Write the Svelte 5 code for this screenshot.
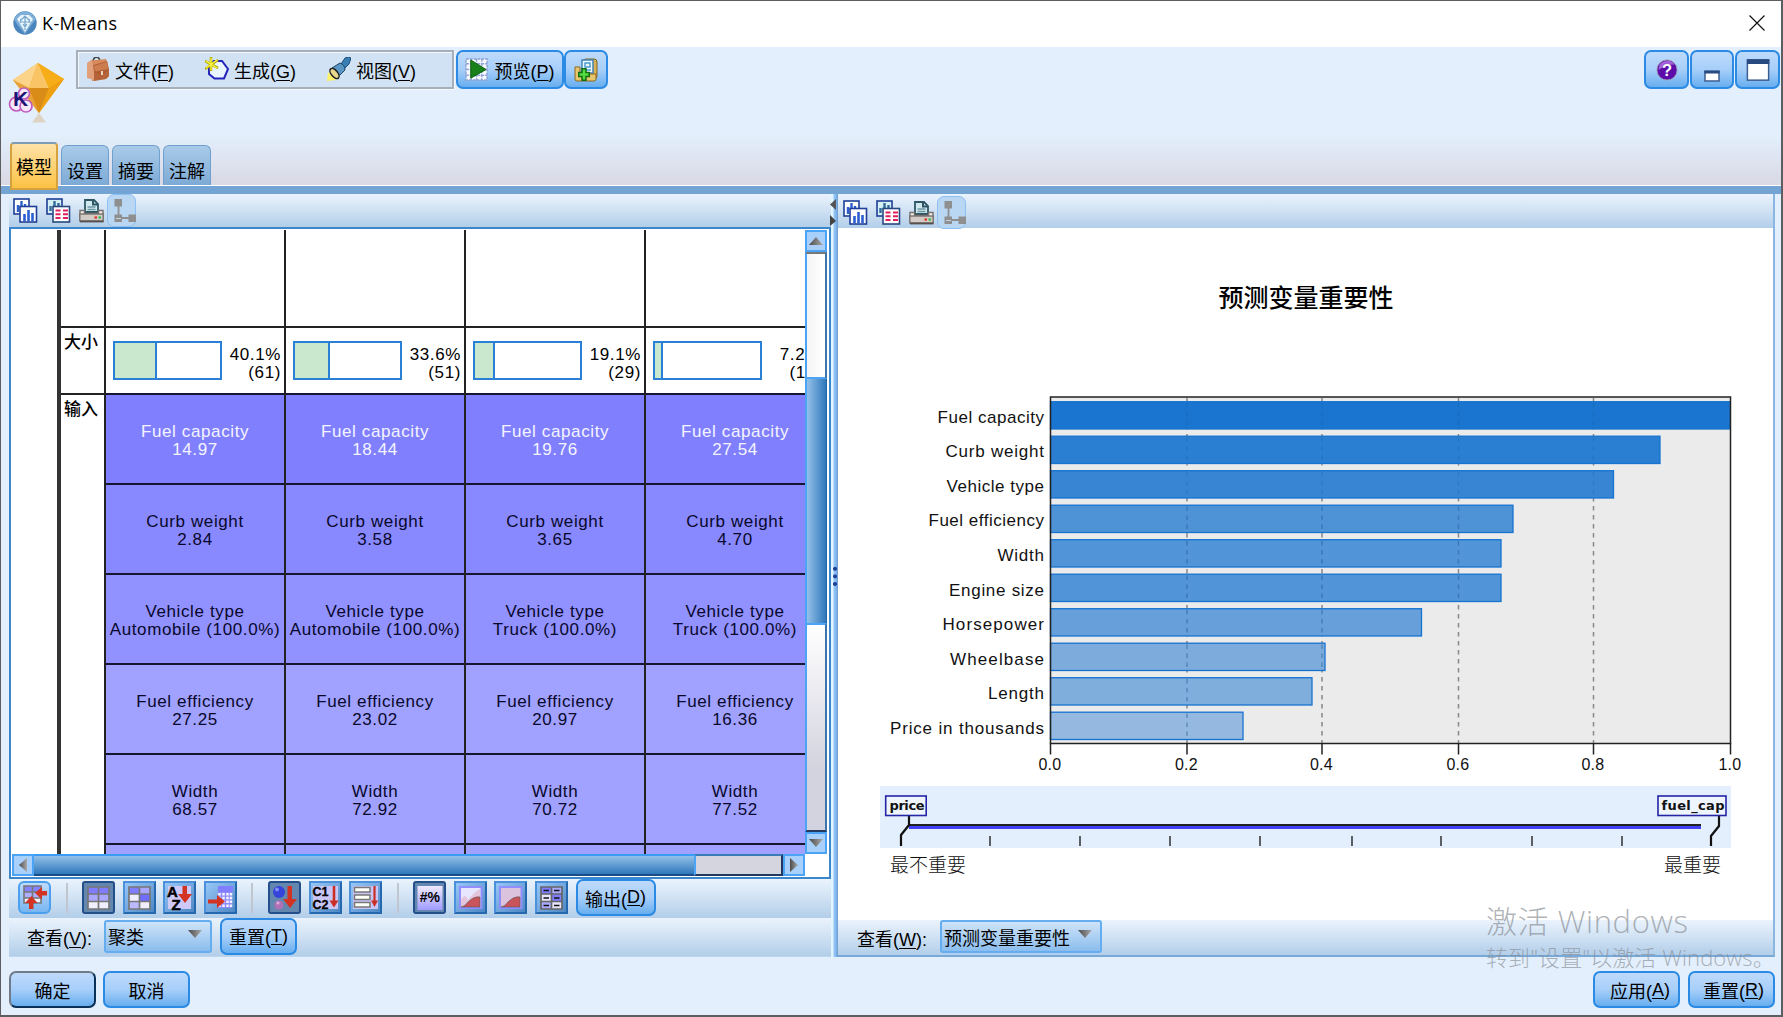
<script>
  const clusters = [
    { pct: '40.1%', n: '(61)', share: 40.1, values: ['14.97', '2.84', 'Automobile (100.0%)', '27.25', '68.57'] },
    { pct: '33.6%', n: '(51)', share: 33.6, values: ['18.44', '3.58', 'Automobile (100.0%)', '23.02', '72.92'] },
    { pct: '19.1%', n: '(29)', share: 19.1, values: ['19.76', '3.65', 'Truck (100.0%)', '20.97', '70.72'] },
    { pct: '7.2%', n: '(11)', share: 7.2, values: ['27.54', '4.70', 'Truck (100.0%)', '16.36', '77.52'] }
  ];
  const inputs = ['Fuel capacity', 'Curb weight', 'Vehicle type', 'Fuel efficiency', 'Width'];
  const bars = [
    { name: 'Fuel capacity', w: 106.5, end: 680, color: '#1a75d0' },
    { name: 'Curb weight', w: 98.5, end: 610, color: '#2a7fd2' },
    { name: 'Vehicle type', w: 97.5, end: 563.5, color: '#3785d3' },
    { name: 'Fuel efficiency', w: 115.5, end: 463, color: '#4f93d7' },
    { name: 'Width', w: 46.5, end: 451, color: '#5195d8' },
    { name: 'Engine size', w: 95, end: 451, color: '#5195d8' },
    { name: 'Horsepower', w: 101.5, end: 371.5, color: '#669fd9' },
    { name: 'Wheelbase', w: 94, end: 275, color: '#7dabdc' },
    { name: 'Length', w: 56, end: 262, color: '#7faddc' },
    { name: 'Price in thousands', w: 154, end: 193, color: '#94b8e0' }
  ];
  const ticks = [[0, '0.0'], [136.5, '0.2'], [271.5, '0.4'], [408, '0.6'], [543, '0.8'], [680, '1.0']];
  const marks = [110, 200, 290, 380, 472, 561, 652, 742];
  const menus = [['文件', 'F'], ['生成', 'G'], ['视图', 'V']];
</script>

{#snippet viewIcons()}
  <svg class="ico" viewBox="0 0 25 25">
    <rect x="1" y="1" width="15" height="15" fill="#fff" stroke="#1f3f98" stroke-width="1.6" />
    <path d="M5 14V7M8.500 14V3M12 14V6" stroke="#2b5fd0" stroke-width="2.400" />
    <rect x="7" y="8.500" width="16.500" height="15.500" fill="#fff" stroke="#1f3f98" stroke-width="1.600" />
    <path d="M11.500 23v-7M15.500 23v-11M19.500 23v-8" stroke="#2b5fd0" stroke-width="2.600" />
  </svg>
  <svg class="ico" viewBox="0 0 25 25">
    <rect x="1" y="1" width="15" height="15" fill="#d5f0f5" stroke="#1f3f98" stroke-width="1.600" />
    <path d="M4.500 13V8M8.500 8V3M12.500 8V5" stroke="#326b98" stroke-width="2.400" />
    <rect x="7" y="8.500" width="16.500" height="15.500" fill="#fff" stroke="#27497f" stroke-width="1.600" />
    <path d="M9.500 12.500h5M17 12.500h5M9.500 16.200h5M17 16.200h5M9.500 20h5M17 20h5" stroke="#e0205c" stroke-width="2" />
  </svg>
  <svg class="ico" viewBox="0 0 25 25">
    <path d="M6 14V2h9l4 4v8z" fill="#cfe9ee" stroke="#2e5664" stroke-width="1.800" />
    <path d="M14 1.500v5h5" fill="none" stroke="#2e5664" stroke-width="2" />
    <path d="M8.500 9h8M8.500 11.500h8" stroke="#6f99a5" stroke-width="1.300" />
    <path d="M1 12.500h4.500v3h14v-3H24V18H1z" fill="#f3f1ee" stroke="#77706e" stroke-width="1.400" />
    <rect x=".8" y="16" width="23.400" height="7" fill="#d2cbc6" stroke="#77706e" stroke-width="1.400" />
    <path d="M1 23.500h23.500" stroke="#57504e" stroke-width="1.800" />
    <path d="M15.500 19.500h2.500" stroke="#e03020" stroke-width="2.200" />
    <path d="M19.500 19.500h2.500" stroke="#30c050" stroke-width="2.200" />
  </svg>
  <span class="ghost">
    <svg viewBox="0 0 28 32">
      <path d="M10.500 8v15h13" fill="none" stroke="#8f8f8f" stroke-width="1.800" />
      <rect x="6.500" y="4" width="7.500" height="7.500" fill="#8f8f8f" />
      <rect x="6.500" y="19.500" width="7.500" height="7.500" fill="#8f8f8f" />
      <path d="M8 23.500h5" stroke="#c5d5e8" />
      <rect x="20.500" y="19.500" width="7.500" height="7.500" fill="#8f8f8f" />
    </svg>
  </span>
{/snippet}

{#snippet gridShape(flip)}
  <rect x="6" y="6" width="21" height="22" fill="#f0efff" />
  <path d="M6 6h21v7H6z" fill="#7f7cff" />
  <path d="M6 13h21v7.500H6z" fill="#a9a7ff" />
  {#if flip}
    <path d="M16.500 6H27v7H16.500z" fill="#a9a7ff" />
    <path d="M6 13h10.500v7.500H6z" fill="#f0efff" />
    <path d="M16.500 13H27v7.500H16.500z" fill="#6f6cff" />
    <path d="M6 20.500h10.500V28H6z" fill="#bbb9ff" />
  {/if}
  <path d="M6 6h21v22H6zM6 13h21M6 20.500h21M16.500 6v22" fill="none" stroke="#777" stroke-width="1.700" />
{/snippet}

<div class="window">
  <div class="title">
    <svg class="app" viewBox="0 0 24 24">
      <circle cx="12" cy="12" r="11.700" fill="#4a86bd" />
      <path d="M1 8Q5 1 12 .3 19 1 23 8l-4 5-7 10L4 13z" fill="#7eafd8" />
      <path d="M4 8l4-4h8l4 4-8 13z" fill="#eaf4fb" />
      <path d="M8 9l4-4 4 4M12 5v14M7 11h10M8 8l-1 4M16 8l1 4M10 13l2 3 2-3" fill="none" stroke="#75a6ce" stroke-width="1.200" />
    </svg>
    <span>K-Means</span>
    <svg class="close" viewBox="0 0 16 16"><path d="M.5.500l15 15M15.500.500l-15 15" stroke="#111" stroke-width="1.200" /></svg>
  </div>

  <div class="header">
    <div class="top">
      <svg class="logo" viewBox="0 0 56 60">
        <path d="M5 17L30 0l26 16-25 34z" fill="#f0a51c" />
        <path d="M5 17L30 0 21 25z" fill="#fbd48a" />
        <path d="M30 0l11 25H21z" fill="#f9c465" />
        <path d="M30 0l26 16-15 9z" fill="#f7ad17" />
        <path d="M5 17l16 8 10 25z" fill="#e8a23a" />
        <path d="M21 25h20L31 50z" fill="#d98c17" />
        <path d="M41 25l15-9-25 34z" fill="#ee9f12" />
        <path d="M31 50l7 9.500H24z" fill="#ddd3c2" />
        <g fill="#f5e7fa" stroke="#c05abf" stroke-width="1.700"><circle cx="16" cy="30.500" r="5.500" /><circle cx="8.500" cy="41" r="7" /><circle cx="18" cy="43" r="6" /></g>
        <text x="5" y="43" class="k">K</text>
      </svg>
      <div class="menubar">
        {#each menus as [label, key], i}
          <span class="menu">
            {#if i === 0}
              <svg viewBox="0 0 24 24"><path d="M7 5.500c0-7 7-7 7 0" fill="none" stroke="#444" stroke-width="1.500" /><path d="M5 3.500L20 2q3 6 3 17l-3 3-14 2z" fill="#d98a5c" /><path d="M1 6l4-3 4 8-1 12-7-2z" fill="#e2a07a" /><path d="M7 8l14-4 2 9-7 5-8-3z" fill="#b5623a" /><path d="M8 9l13-4 1 8-6 3-7-2z" fill="#cd7c50" /><path d="M16 13l7-1v7l-3 3-12 2V15z" fill="#a9552e" opacity=".75" /><path d="M16 14v4" stroke="#ecd5c0" stroke-width="2" /></svg>
            {:else if i === 1}
              <svg viewBox="0 0 24 24"><path d="M9 4h8l6 8-4 9.500H9.500L4 17V9z" fill="#eaf6ff" stroke="#2424bc" stroke-width="2" /><path d="M6 0v14M0 4l13 7M13 3L0 12" stroke="#b6ae10" stroke-width="2.600" /><path d="M6 1v12M1 4l11 7M12 3L1 11" stroke="#fff63a" stroke-width="1.300" /></svg>
            {:else}
              <svg viewBox="0 0 24 24"><path d="M1 15L0 24l9-1z" fill="#fff26a" /><path d="M14 7L18 1q4-2 6 0l-2 6-6 6z" fill="#387fb5" stroke="#1e4e79" /><path d="M5 11l8-5q5 2 5 7l-6 6z" fill="#5a97c5" stroke="#1b4467" /><ellipse cx="7.500" cy="16.500" rx="3.200" ry="6" transform="rotate(-40 7.500 16.500)" fill="#e8d68e" stroke="#222" stroke-width="1.500" /></svg>
            {/if}
            <span>{label}(<u>{key}</u>)</span>
          </span>
        {/each}
      </div>
      <button class="btn preview">
        <svg viewBox="0 0 24 24"><path d="M1 1h22v22H1zM1 6h22M1 12h22M1 18h22M6.500 1v22M12 1v22M17.500 1v22" fill="#f6faff" stroke="#8fa2d5" stroke-width="1.500" stroke-dasharray="3 1" /><path d="M6 2l16 10L6 21z" fill="#188018" stroke="#0c600f" /></svg>
        <span>预览(<u>P</u>)</span>
      </button>
      <button class="btn add">
        <svg viewBox="0 0 26 26"><rect x="10" y="2" width="14" height="20" rx="3" fill="#d8b256" stroke="#84631c" /><path d="M9 3h11v13H9z" fill="#eefaff" stroke="#4082b5" stroke-width="1.500" /><path d="M12 6h5v4h-5zM12 13h6" fill="none" stroke="#4b9bd0" stroke-width="1.500" /><path d="M2 10h5v7h16v5q0 2-2 2H4q-2 0-2-2z" fill="#e6c56c" stroke="#8a6820" /><path d="M11 11v13M5 17.500h12" stroke="#126d12" stroke-width="5.500" /><path d="M11 12.500v10M6.500 17.500h9" stroke="#53dd42" stroke-width="2.500" /></svg>
      </button>
      <div class="wins">
        <button class="btn"><svg viewBox="0 0 24 24"><circle cx="12" cy="12" r="11" fill="#5c0ca8" stroke="#9a9ab4" /><path d="M3 12Q2 3 12 2q6 0 8 4-9 0-17 6z" fill="#a160d5" /><text x="12" y="18.500" class="q">?</text></svg></button>
        <button class="btn"><svg viewBox="0 0 24 24"><rect x="5" y="13.500" width="14" height="9.500" fill="#fff" stroke="#3b5d90" stroke-width="1.500" /><path d="M4.300 14h15.400" stroke="#274b80" stroke-width="3" /></svg></button>
        <button class="btn"><svg viewBox="0 0 26 26"><rect x="1.500" y="2" width="23" height="22" fill="#fff" stroke="#3b5d90" stroke-width="1.600" /><path d="M1 4h24.300" stroke="#274b80" stroke-width="5" /></svg></button>
      </div>
    </div>
    <div class="tabs">
      <span class="tab on">模型</span><span class="tab">设置</span><span class="tab">摘要</span><span class="tab">注解</span>
    </div>
  </div>
  <div class="rule"></div>

  <div class="main">
    <section class="left">
      <div class="strip">{@render viewIcons()}</div>
      <div class="viewer">
        <div class="upper">
          <div class="table">
            <div class="headcol">
              <div class="blank"></div>
              <div class="size">大小</div>
              <div class="in">输入</div>
            </div>
            {#each clusters as c}
              <div class="col">
                <div class="blank"></div>
                <div class="size">
                  <div class="meter"><i style="width:{c.share}%"></i></div>
                  <div class="pct">{c.pct}<br />{c.n}</div>
                </div>
                {#each inputs as name, r}
                  <div class="cell r{r}"><span>{name}<br />{c.values[r]}</span></div>
                {/each}
                <div class="cell r5"></div>
              </div>
            {/each}
          </div>
          <div class="vbar">
            <div class="sb"><svg viewBox="0 0 14 8"><path d="M0 8l7-8 7 8z" fill="url(#arr)" /></svg></div>
            <div class="vt a"></div>
            <div class="vthumb"></div>
            <div class="vt b"></div>
            <div class="sb"><svg viewBox="0 0 14 8"><path d="M0 0h14L7 8z" fill="url(#arr)" /></svg></div>
          </div>
        </div>
        <div class="hbar">
          <div class="sb"><svg class="n" viewBox="0 0 8 14"><path d="M8 0v14L0 7z" fill="url(#arr)" /></svg></div>
          <div class="hthumb"></div>
          <div class="ht"></div>
          <div class="sb"><svg class="n" viewBox="0 0 8 14"><path d="M0 0l8 7-8 7z" fill="url(#arr)" /></svg></div>
        </div>
      </div>
      <div class="strip tools">
        <span class="tool round"><svg viewBox="0 0 33 33"><g transform="translate(0 -1)"><path d="M6 6h17v17H6z" fill="#f0efff" /><path d="M6 6h17v6H6z" fill="#8582ff" /><path d="M6 12h17v6H6z" fill="#b0aeff" /><path d="M6 6h17v17H6zM6 12h17M6 18h17M14.500 6v17" fill="none" stroke="#777" stroke-width="1.600" /><path d="M17 13l7-6v4h5v4.500h-5v4z" fill="#d23322" /><path d="M13.500 16l6 7h-4v6h-4.500v-6H7z" fill="#d23322" /></g></svg></span>
        <span class="sep"></span>
        <span class="tool dark"><svg viewBox="0 0 33 33">{@render gridShape(false)}</svg></span>
        <span class="tool"><svg viewBox="0 0 33 33">{@render gridShape(true)}</svg></span>
        <span class="tool"><svg viewBox="0 0 33 33"><rect x="5" y="5" width="23" height="23" fill="#cfc9f7" /><text x="4" y="15.500" class="az">A</text><text x="8.500" y="29" class="az">Z</text><path d="M19.500 5h4.500v8h5L22 22l-7-9h4.500z" fill="#d23322" /></svg></span>
        <span class="tool"><svg viewBox="0 0 33 33"><path d="M14 5h15v6H14z" fill="#817eff" /><path d="M14 11h14v16H14z" fill="#8f8cff" /><path d="M15.500 12v15M19.500 12v15M23.500 12v15M27 12v15" stroke="#f4f2ff" stroke-width="2.500" stroke-dasharray="2.500 1.300" /><path d="M4 18.500h9V14l8 6.500-8 6.500v-4.500H4z" fill="#d23322" /></svg></span>
        <span class="sep"></span>
        <span class="tool dark"><svg viewBox="0 0 33 33"><circle cx="11" cy="11" r="6" fill="#3443da" /><circle cx="9" cy="8.500" r="2" fill="#7f8df5" /><circle cx="11" cy="24" r="4.500" fill="#b070b5" /><circle cx="10" cy="22" r="1.500" fill="#dfaae0" /><path d="M19.500 5h4.500v13h5L22 27l-7-9h4.500z" fill="#d23322" /></svg></span>
        <span class="tool"><svg viewBox="0 0 33 33"><rect x="4" y="5" width="25" height="23" fill="#c9c6f6" /><text x="3.500" y="15" class="c12">C1</text><text x="3.500" y="27.500" class="c12">C2</text><path d="M25 5v17" stroke="#c92f27" stroke-width="2.600" /><path d="M20.500 19.500h9l-4.500 7z" fill="#c92f27" /></svg></span>
        <span class="tool"><svg viewBox="0 0 33 33"><rect x="4" y="5" width="25" height="23" fill="#c9c6f6" /><g fill="#fffffa" stroke="#777" stroke-width="1.500"><rect x="5.500" y="6.500" width="15.500" height="4.500" /><rect x="5.500" y="14" width="15.500" height="4.500" /><rect x="5.500" y="21.500" width="15.500" height="4.500" /></g><path d="M25.500 5v17" stroke="#c92f27" stroke-width="2.200" /><path d="M22 19.500h7l-3.500 6.500z" fill="#c92f27" /></svg></span>
        <span class="sep"></span>
        <span class="tool dark"><svg viewBox="0 0 33 33"><defs><linearGradient id="np" x2="0" y2="1"><stop stop-color="#efeaff" /><stop offset="1" stop-color="#a09cff" /></linearGradient></defs><rect x="4.500" y="5" width="25" height="24" fill="url(#np)" /><text x="16.800" y="20.500" class="np">#%</text></svg></span>
        <span class="tool"><svg viewBox="0 0 33 33"><rect x="6" y="6" width="21.500" height="21" fill="#e8e6ff" stroke="#918fff" stroke-width="2" /><path d="M7 19q4-8 7 0 7-9 12-11v18H7z" fill="#e4c6dc" /><path d="M7 26q3 0 7-5 6-6 12-5v10z" fill="#c9545c" stroke="#555" stroke-width=".6" /></svg></span>
        <span class="tool"><svg viewBox="0 0 33 33"><rect x="6" y="6" width="21.500" height="21" fill="#dcc3dd" stroke="#918fff" stroke-width="2" /><path d="M7 26q3 0 7-5 6-6 12-5v10z" fill="#c9545c" stroke="#555" stroke-width=".6" /></svg></span>
        <span class="tool"><svg viewBox="0 0 33 33"><path d="M6 6h21v22H6z" fill="#e9e7ff" /><path d="M6 6h11v7H6zM17 13h10v7H17z" fill="#7f7cff" /><path d="M17 6h10v7H17zM6 20h11v8H6z" fill="#aaa8ff" /><path d="M6 6h21v22H6zM6 13h21M6 20.500h21M16.500 6v22" fill="none" stroke="#666" stroke-width="1.700" /><path d="M8.500 9.500H14M19 9.500h5.500M8.500 17H14M19 17h5.500M8.500 24.500H14M19 24.500h5.500" stroke="#111" stroke-width="1.700" /></svg></span>
        <button class="btn out">输出(<u>D</u>)</button>
      </div>
      <div class="strip view">
        <span class="lbl">查看(<u>V</u>):</span>
        <span class="select s1">聚类<svg viewBox="0 0 14 8"><path d="M0 0h14L7 8z" fill="url(#arr)" /></svg></span>
        <button class="btn rs">重置(<u>T</u>)</button>
      </div>
    </section>

    <div class="gutter">
      <svg class="collapse" viewBox="0 0 8 28"><path d="M6 1v11L0 6.500z" fill="#555" /><path d="M0 17l6 6-6 5z" fill="#444" /></svg>
      <span class="dots"></span>
    </div>

    <section class="right">
      <div class="strip">{@render viewIcons()}</div>
      <svg class="chart" viewBox="838 228 935 692">
        <defs>
          <linearGradient id="arr"><stop stop-color="#4b4b4b" /><stop offset="1" stop-color="#aaa" /></linearGradient>
        </defs>
        <text x="1306" y="307" class="ct">预测变量重要性</text>
        <rect x="1050.500" y="397" width="680" height="346.500" fill="#ebebeb" />
        {#each ticks as [x]}
          {#if x > 0 && x < 680}
            <path d="M{1050.5 + x} 398V743" stroke="#888" stroke-width="1.500" stroke-dasharray="4.500 4.500" />
          {/if}
        {/each}
        {#each bars as b, i}
          <rect x="1050.500" y={401.7 + i * 34.5} width={b.end - 0.5} height="27.300" fill={b.color} stroke="#1673d0" stroke-width="1.300" />
          {#each ticks as [x]}
            {#if x > 0 && x < b.end}
              <path d="M{1050.5 + x} {403 + i * 34.5}v25" stroke="#174f88" stroke-opacity={i < 3 ? 0.2 : 0.4} stroke-width="1.500" stroke-dasharray="4.500 4.500" />
            {/if}
          {/each}
          <text x={1044 - b.w} y={422.5 + i * 34.6} textLength={b.w} class="lab">{b.name}</text>
        {/each}
        <rect x="1050.500" y="397" width="680" height="346.500" fill="none" stroke="#222" stroke-width="1.500" />
        {#each ticks as [x, t]}
          <path d="M{1050.5 + x} 743v11.500" stroke="#222" stroke-width="1.500" />
          <text x={1050 + x} y="769.500" class="ax">{t}</text>
        {/each}

        <rect x="880" y="786" width="851" height="62" fill="#e3effc" />
        <path d="M909 825H1701" stroke="#222" stroke-width="2" />
        <path d="M909 827.500H1701" stroke="#4040f5" stroke-width="3" />
        {#each marks as m}
          <path d="M{880 + m} 836v10" stroke="#222" stroke-width="1.400" />
        {/each}
        <path d="M909 816v9l-8 10v11" fill="none" stroke="#111" stroke-width="2.200" />
        <path d="M1719 816v10l-8 10v10" fill="none" stroke="#111" stroke-width="2.200" />
        <rect x="885.700" y="796" width="40.500" height="19.500" fill="#eef5fd" stroke="#2525a5" stroke-width="1.600" />
        <rect x="1658" y="796" width="68" height="19.500" fill="#eef5fd" stroke="#2525a5" stroke-width="1.600" />
        <text x="889.500" y="810" class="tag" textLength="35">price</text>
        <text x="1661.500" y="810" class="tag" textLength="63">fuel_cap</text>
        <text x="890" y="871.500" class="im">最不重要</text>
        <text x="1664" y="871.500" class="im">最重要</text>
      </svg>
      <div class="strip view">
        <span class="lbl">查看(<u>W</u>):</span>
        <span class="select s2">预测变量重要性<svg viewBox="0 0 14 8"><path d="M0 0h14L7 8z" fill="url(#arr)" /></svg></span>
      </div>
    </section>
  </div>

  <div class="footer">
    <button class="btn ok">确定</button>
    <button class="btn cancel">取消</button>
    <button class="btn apply">应用(<u>A</u>)</button>
    <button class="btn reset">重置(<u>R</u>)</button>
  </div>

  <div class="mark"><b>激活 Windows</b><span>转到"设置"以激活 Windows。</span></div>
</div>

<style>
  :global(body) { margin: 0; overflow: hidden; }
  .window, .window * { box-sizing: border-box; }
  .window {
    width: 1783px; height: 1017px; position: relative; overflow: hidden;
    display: flex; flex-direction: column;
    border: 1px solid #5c5e62; border-bottom-width: 2px; border-right-width: 2px;
    background: #e3effc; color: #000;
    font: 18px 'Liberation Sans', 'Noto Sans CJK SC', sans-serif;
    white-space: nowrap;
  }
  svg { display: block; flex: none; }
  u { text-underline-offset: 2px; text-decoration-thickness: 1px; }
  .title { height: 46px; flex: none; background: #fff; display: flex; align-items: center; padding: 0 16px 2px 12px; font: 18px 'Open Sans', sans-serif; }
  .title span { margin-left: 5px; letter-spacing: .4px; }
  .app { width: 24px; height: 24px; }
  .close { width: 16px; height: 16px; margin-left: auto; }
  .header { height: 138px; flex: none; display: flex; flex-direction: column; justify-content: space-between; background: linear-gradient(#e3effc 64%, #dad9e6 98%); }
  .top { display: flex; padding: 3px 1px 0 7px; align-items: flex-start; }
  .logo { width: 56px; height: 60px; margin: 13px 12px 0 0; }
  .k { font: bold 21px 'Liberation Sans', sans-serif; fill: #1b1475; }
  .menubar { width: 378px; height: 39px; border: 2px solid #a6afba; box-shadow: inset 1px 1px #f4f8fd, 1px 1px #f4f8fd; background: #d0e2f3; display: flex; align-items: center; padding-left: 8px; }
  .menu { display: flex; align-items: center; gap: 5px; }
  .menu + .menu { margin-left: 31px; }
  .menu svg { width: 24px; height: 24px; margin-top: -1px; }
  .btn {
    height: 39px; padding: 0; border: 2px solid #2a8ae4; border-radius: 7px; color: #000;
    background: linear-gradient(#bedafb, #a7cffa 50%, #68aeef);
    font: inherit; display: flex; align-items: center; justify-content: center; flex: none;
  }
  .preview { width: 108px; margin-left: 2px; gap: 6px; }
  .preview svg { width: 23px; height: 23px; }
  .add { width: 44px; }
  .add svg { width: 26px; height: 26px; }
  .wins { display: flex; margin-left: auto; gap: 1px; }
  .wins .btn { width: 44.600px; }
  .wins svg { width: 24px; height: 24px; }
  .wins .btn:first-child svg { width: 22px; height: 22px; }
  .q { font: bold 18px 'Liberation Sans', sans-serif; fill: #fff; text-anchor: middle; }
  .tabs { display: flex; align-items: flex-end; height: 43px; padding-left: 9px; gap: 3px; position: relative; z-index: 1; }
  .tab { width: 48px; height: 40px; border: 1px solid #6fa0cd; border-bottom: 0; border-radius: 6px 6px 0 0; background: linear-gradient(#a9cbe9, #7daad5); display: flex; justify-content: center; align-items: center; padding-top: 8px; }
  .tab.on { height: 48px; margin-bottom: -5px; border: 2px solid #d5a33d; border-top-color: #7f9cb5; background: linear-gradient(#ffe2a8, #fdc244); padding: 0; border-radius: 4px 4px 0 0; }
  .rule { height: 9px; flex: none; background: #74a4d3; border-top: 1px solid #fff; }
  .main { height: 763px; flex: none; display: flex; padding-left: 8px; }
  .left { width: 822px; display: flex; flex-direction: column; }
  .strip { display: flex; align-items: center; background: linear-gradient(#eaf3fd, #d2e3f4 45%, #b2cee9); flex: none; height: 33px; padding-left: 4px; }
  .strip .ico { width: 25px; height: 25px; margin-right: 8px; }
  .ghost { width: 29px; height: 33px; margin-left: -5px; border: 1px solid #8cc0f2; border-radius: 7px; background: #b9d6f2; }
  .ghost svg { width: 28px; height: 32px; }
  .viewer { height: 652px; border: 2px solid #3c86cc; background: #fff; padding: 1px; }
  .upper { display: flex; height: 624px; }
  .table { width: 793px; height: 624px; overflow: hidden; display: flex; padding-left: 45px; font-size: 17px; line-height: 18px; letter-spacing: .62px; }
  .headcol { width: 47px; flex: none; border-left: 4px solid #333; letter-spacing: 0; font-family: 'Noto Sans CJK SC', sans-serif; font-weight: 500; }
  .headcol > div { padding: 4px 0 0 3px; }
  .col { width: 180px; flex: none; border-left: 2px solid #222; }
  .blank { height: 96px; }
  .size { height: 67px; border-top: 2px solid #222; }
  .headcol .in { border-top: 2px solid #222; }
  .col .size { display: flex; padding: 13px 4px 0 7px; }
  .meter { width: 109px; height: 39px; border: 2px solid #2a80d5; }
  .meter i { display: block; height: 100%; background: #cae8ce; border-right: 2px solid #2a80d5; }
  .pct { margin-left: auto; padding-top: 5px; text-align: right; margin-right: -1px; }
  .cell { height: 90px; padding-top: 4px; border-top: 2px solid #161630; text-align: center; display: flex; align-items: center; justify-content: center; background: #a1a1ff; color: #08082c; }
  .r0 { background: #8080ff; color: #f4f4ff; }
  .r1 { background: #8989ff; }
  .r2 { background: #9191ff; }
  .sb { width: 22px; height: 22px; background: #a9d0fa; border: 2px solid #4ba4f5; display: flex; align-items: center; justify-content: center; flex: none; }
  .sb svg { width: 14px; height: 8px; }
  .sb svg.n { width: 8px; height: 14px; }
  .vbar { width: 22px; display: flex; flex-direction: column; flex: none; }
  .vt { border: 2px solid #4ba4f5; border-right-color: #3b75ad; background: linear-gradient(90deg, #f4f4f6, #fff); }
  .vt.a { height: 127px; border-top-color: #777; }
  .vt.b { flex: 1; background: linear-gradient(#fff, #d3d3df 70%); border-bottom-color: #223a60; }
  .vthumb { height: 244px; background: linear-gradient(90deg, #93c1e8, #2f78bc); border-left: 2px solid #4ba4f5; border-right: 1px solid #2264a4; }
  .hbar { display: flex; width: 793px; height: 22px; }
  .hthumb { width: 660px; background: linear-gradient(#93c1e8, #2f78bc); border-top: 2px solid #3a9cf5; border-bottom: 2px solid #184d88; }
  .ht { flex: 1; background: #d5d5e0; border: 2px solid #223a60; border-left-color: #4ba4f5; border-top-color: #397ab9; }
  .tools { height: 39px; padding: 0 0 2px 9px; gap: 7.600px; align-items: center; }
  .tool { width: 33px; height: 33px; border: 2px solid #2468b0; border-top-color: #4a90da; border-left-color: #4a90da; background: linear-gradient(135deg, #98c7f7, #4e88c4); flex: none; }
  .tool svg { width: 33px; height: 33px; margin: -2px; }
  .tool.round { border: 2px solid #4aa0ee; border-radius: 6px; background: linear-gradient(#bedafb, #78b6f1); }
  .tool.dark { background: #6487b0; border-color: #23508a; border-radius: 3px; }
  .sep { width: 2px; height: 30px; background: #bfc6cf; margin: 0 6.900px 0 7px; flex: none; }
  .az { font: bold 15px/1 'Liberation Sans', sans-serif; stroke: #000; stroke-width: .5px; }
  .c12 { font: bold 12.500px 'Liberation Sans', sans-serif; stroke: #000; stroke-width: .3px; }
  .np { font: bold 14px 'Liberation Sans', sans-serif; text-anchor: middle; }
  .out { width: 80px; height: 37px; }
  .view { height: 39px; border-bottom: 1px solid #bcd6ef; }
  .left .view { padding-left: 18px; }
  .lbl { width: 77px; }
  .select { height: 33px; border: 2px solid #64adf1; border-radius: 3px; background: linear-gradient(#cfe3f8, #8bbdee); display: flex; align-items: center; justify-content: space-between; padding: 0 8px 0 2px; margin-top: -2px; }
  .select svg { width: 14px; height: 8px; margin-top: -5px; }
  .s1 { width: 108px; }
  .rs { width: 77px; height: 37px; margin-left: 8px; margin-top: -2px; }
  .gutter { width: 7px; flex: none; background: linear-gradient(90deg, #e3f5ff 0 2px, #8fc3f7 3px 4px, #6b9cd0); position: relative; }
  .collapse { position: absolute; left: -1px; top: 4px; width: 8px; height: 28px; }
  .dots { position: absolute; left: 2px; top: 371px; width: 4px; height: 23px; background: radial-gradient(circle, #1d3f98 0 1.800px, transparent 2.200px) 0 0 / 4px 7.600px; }
  .right { width: 937px; height: 763px; border-right: 2px solid #8bb6e2; border-bottom: 2px solid #78aad9; display: flex; flex-direction: column; background: #fff; }
  .right > .strip:first-child { height: 34px; padding: 2px 0 0 5px; }
  .chart { width: 935px; height: 692px; font: 17px 'Liberation Sans', 'Noto Sans CJK SC', sans-serif; }
  .right .view { flex: 1; border: 0; padding-left: 19px; }
  .right .lbl { width: 83px; }
  .s2 { width: 162px; }
  .ct { font: 500 25px 'Noto Sans CJK SC', sans-serif; text-anchor: middle; }
  .lab { fill: #111; }
  .ax { text-anchor: middle; font-size: 16px; letter-spacing: .3px; fill: #111; }
  .tag { font: bold 13px 'DejaVu Sans', sans-serif; fill: #111; }
  .im { font: 300 19px 'Noto Sans CJK SC', sans-serif; fill: #111; }
  .footer { flex: 1; display: flex; align-items: flex-start; padding: 14px 6px 0 8px; }
  .footer .btn { height: 37px; width: 87px; padding-top: 1px; }
  .footer .ok { border-color: #0c3157; border-top-color: #6f7b89; border-left-color: #6f7b89; }
  .cancel { margin-left: 7px; }
  .footer .apply { margin-left: auto; padding-left: 7px; }
  .footer .reset { margin-left: 8px; padding-left: 4px; }
  .mark { position: absolute; left: 1485px; top: 897px; display: flex; flex-direction: column; color: rgba(135, 140, 148, .68); font: 31px/46px 'Open Sans', 'Noto Sans CJK SC', sans-serif; pointer-events: none; }
  .mark b { font-weight: 300; letter-spacing: .6px; }
  .mark span { font-size: 22px; line-height: 26px; font-weight: 300; letter-spacing: .1px; }
</style>
